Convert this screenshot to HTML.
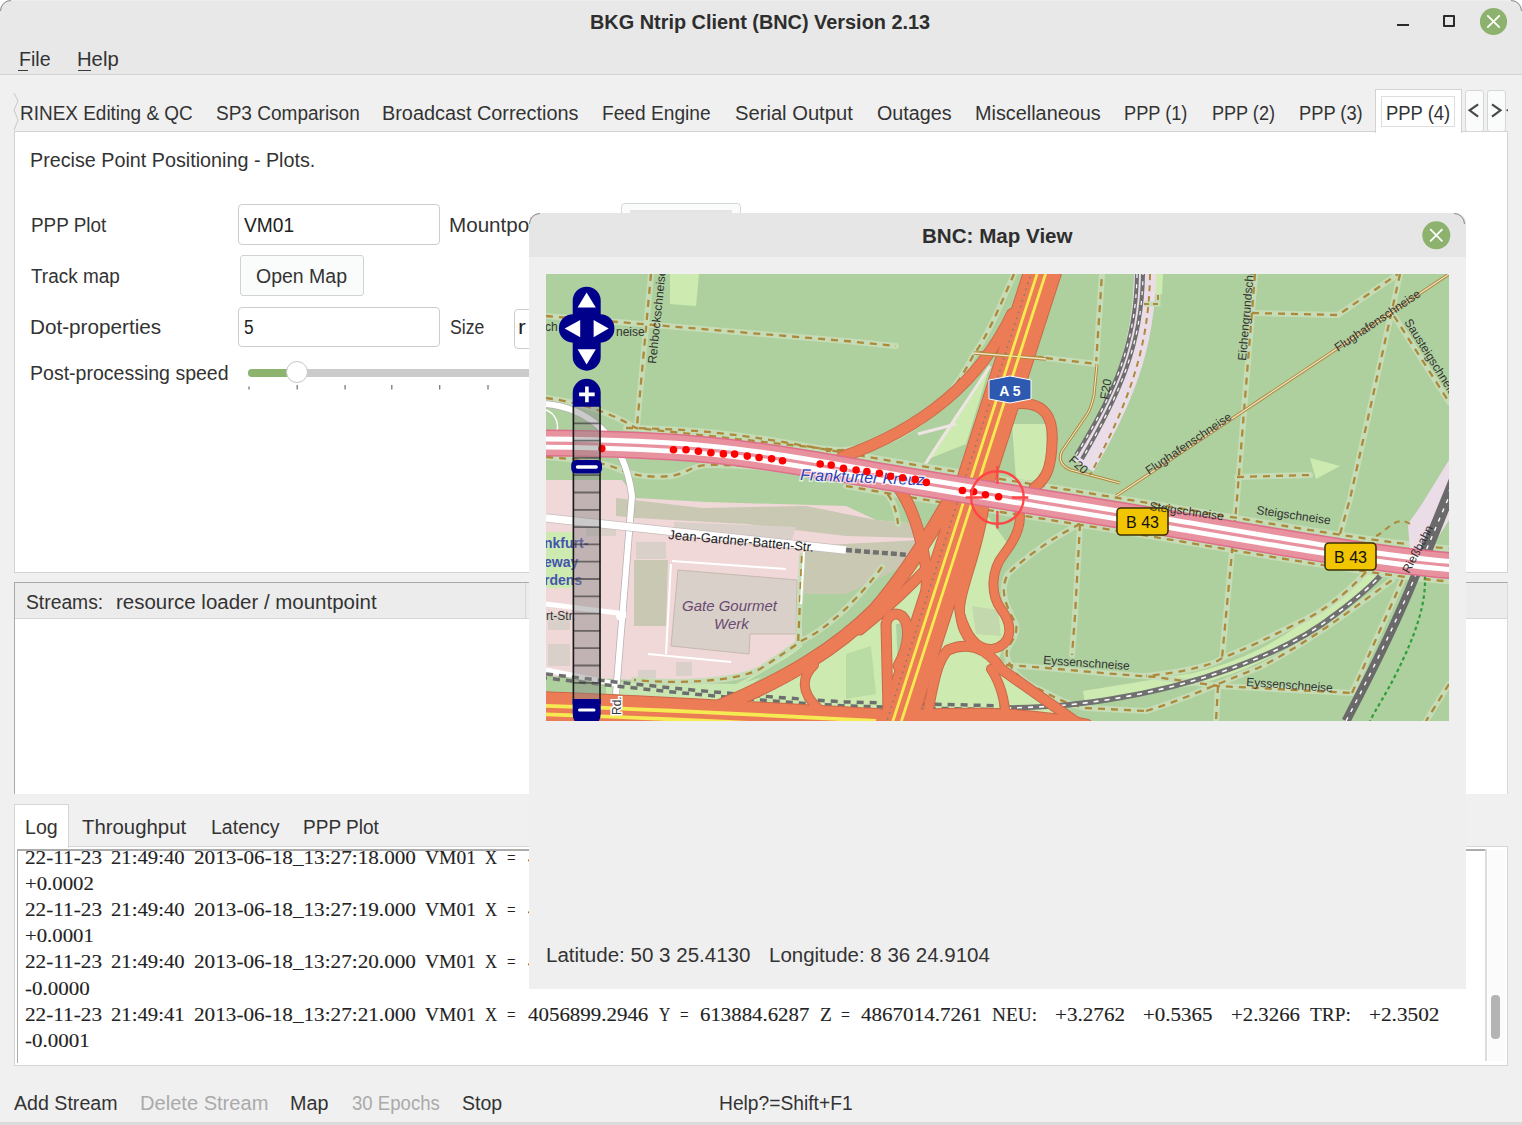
<!DOCTYPE html>
<html><head><meta charset="utf-8">
<style>
html,body{margin:0;padding:0;}
body{width:1522px;height:1125px;overflow:hidden;position:relative;background:#ffffff;font-family:"Liberation Sans",sans-serif;}
.a{position:absolute;box-sizing:border-box;}
.t{position:absolute;white-space:pre;line-height:1;transform-origin:0 0;}
</style></head><body>
<!-- window -->
<div class="a" style="left:0;top:0;width:1522px;height:1125px;background:#f0f0f0;border-radius:10px 10px 0 0;"></div>
<div class="a" style="left:0;top:0;width:1522px;height:75px;background:#e8e8e8;border-radius:10px 10px 0 0;border-top:1px solid #eeeeee;border-bottom:1px solid #d3d3d3;"></div>
<svg class="a" style="left:0;top:0" width="1522" height="14"><path d="M0.5,11 A10.5,10.5 0 0 1 11,0.5" fill="none" stroke="#8a8a8a" stroke-width="1"/><path d="M1511,0.5 A10.5,10.5 0 0 1 1521.5,11" fill="none" stroke="#8a8a8a" stroke-width="1"/></svg>
<div class="a" style="left:0;top:1122px;width:1522px;height:3px;background:#dadada;"></div>
<!-- window controls -->
<div class="a" style="left:1397px;top:23.5px;width:12px;height:2.5px;background:#2a2a2a;"></div>
<div class="a" style="left:1442.5px;top:15px;width:12px;height:12px;border:2px solid #2a2a2a;border-radius:1px;"></div>
<svg class="a" style="left:1479px;top:7px" width="29" height="29" viewBox="0 0 29 29"><circle cx="14.5" cy="14.5" r="13.6" fill="#8cb26e"/><path d="M8.3 8.3L20.7 20.7M20.7 8.3L8.3 20.7" stroke="#fff" stroke-width="1.8"/></svg>
<!-- menu underline -->
<div class="a" style="left:18px;top:69.5px;width:10px;height:1.5px;background:#3a3a3a;"></div>
<div class="a" style="left:78px;top:69.5px;width:13px;height:1.5px;background:#3a3a3a;"></div>
<!-- tab scroll indicator left -->
<svg class="a" style="left:12px;top:92px" width="10" height="40" viewBox="0 0 10 40"><path d="M2 1 L6 9 L2 18 L6 28 L2 38" fill="none" stroke="#c8c8c8" stroke-width="1"/></svg>
<!-- main tab pane -->
<div class="a" style="left:14px;top:131px;width:1494px;height:442px;background:#fff;border:1px solid #d3d3d3;"></div>
<!-- selected tab -->
<div class="a" style="left:1375px;top:89px;width:87px;height:44px;background:#fff;border:1px solid #d3d3d3;border-bottom:none;"></div>
<div class="a" style="left:1381px;top:96px;width:74px;height:31px;border:1px solid #dedede;"></div>
<!-- tab arrows -->
<div class="a" style="left:1464.5px;top:89.5px;width:19px;height:42px;background:#fafbfb;border:1px solid #d6d6d6;border-radius:3px;"></div>
<div class="a" style="left:1487px;top:89.5px;width:19px;height:42px;background:#fafbfb;border:1px solid #d6d6d6;border-radius:3px;"></div>
<svg class="a" style="left:1464px;top:89px" width="44" height="44" viewBox="0 0 44 44"><path d="M14.1,15.3 L5.6,21.3 L14.1,27.7 M28,15.3 L36.5,21.3 L28,27.7" fill="none" stroke="#4a4a4a" stroke-width="2.2"/><circle cx="43.4" cy="21.3" r="1" fill="#444"/></svg>
<!-- form widgets -->
<div class="a" style="left:238px;top:203.5px;width:202px;height:41px;background:#fff;border:1px solid #cdcdcd;border-radius:4px;"></div>
<div class="a" style="left:239.5px;top:254.5px;width:124px;height:41.5px;background:#fafbfb;border:1px solid #d2d2d2;border-radius:3px;"></div>
<div class="a" style="left:238px;top:306.5px;width:202px;height:40.5px;background:#fff;border:1px solid #cdcdcd;border-radius:4px;"></div>
<div class="a" style="left:514px;top:308.5px;width:120px;height:40px;background:#fff;border:1px solid #cdcdcd;border-radius:4px;"></div>
<div class="a" style="left:621px;top:203px;width:120px;height:40px;background:#fafbfb;border:1px solid #d6d6d6;border-radius:4px;"></div>
<div class="a" style="left:630px;top:209.5px;width:102px;height:10px;background:#e4e4e4;"></div>
<!-- slider -->
<div class="a" style="left:248px;top:368.5px;width:400px;height:8.5px;background:#cbcbcb;border-radius:4px;"></div>
<div class="a" style="left:248px;top:368.5px;width:50px;height:8.5px;background:#8cb46e;border-radius:4px 0 0 4px;"></div>
<div class="a" style="left:286.2px;top:361.3px;width:22px;height:22px;background:#fff;border:1px solid #c6c6c6;border-radius:50%;"></div>
<svg class="a" style="left:240px;top:380px" width="290" height="14" viewBox="0 0 290 14"><g stroke="#7a7a7a" stroke-width="1.3"><path d="M9 6.5V9.5M57.2 5V9.5M105.1 5V9.5M151.8 5V9.5M199.7 5V9.5M248 5V9.5"/></g></svg>
<!-- streams box -->
<div class="a" style="left:14px;top:582px;width:1494px;height:212px;background:#fff;border-top:1px solid #a9a9a9;border-left:1px solid #a9a9a9;border-right:1px solid #d9d9d9;"></div>
<div class="a" style="left:15px;top:583px;width:1492px;height:36px;background:#ececec;border-bottom:1px solid #d6d6d6;"></div>
<div class="a" style="left:525px;top:583px;width:1px;height:35px;background:#d6d6d6;"></div>
<!-- log tab widget -->
<div class="a" style="left:14px;top:846px;width:1494px;height:220px;background:#fff;border:1px solid #d6d6d6;"></div>
<div class="a" style="left:14px;top:803.5px;width:55px;height:44px;background:#fff;border:1px solid #d6d6d6;border-bottom:none;"></div>
<div class="a" style="left:17px;top:848.5px;width:1470px;height:214px;background:#fff;border-top:2px solid #acacac;border-left:1px solid #acacac;"></div>
<div class="a" style="left:1485px;top:849px;width:1.5px;height:212px;background:#dcdcdc;"></div>
<div class="a" style="left:1488px;top:850px;width:17px;height:211px;background:#fbfbfb;"></div>
<div class="a" style="left:1491px;top:995px;width:8.5px;height:43.5px;background:#b4b4b4;border-radius:4px;"></div>
<div class="t" style="left:589.61px;top:11.00px;font:normal 700 20px 'Liberation Sans';color:#2e2e2e;transform:scaleX(0.9937);">BKG Ntrip Client (BNC) Version 2.13</div>
<div class="t" style="left:18.52px;top:48.00px;font:normal 400 20px 'Liberation Sans';color:#333333;transform:scaleX(0.9806);">File</div>
<div class="t" style="left:77.49px;top:48.00px;font:normal 400 20px 'Liberation Sans';color:#333333;transform:scaleX(1.0123);">Help</div>
<div class="t" style="left:20.05px;top:102.40px;font:normal 400 20px 'Liberation Sans';color:#333333;transform:scaleX(0.9478);">RINEX Editing &amp; QC</div>
<div class="t" style="left:216.00px;top:102.40px;font:normal 400 20px 'Liberation Sans';color:#333333;transform:scaleX(0.9510);">SP3 Comparison</div>
<div class="t" style="left:382.11px;top:102.40px;font:normal 400 20px 'Liberation Sans';color:#333333;transform:scaleX(0.9931);">Broadcast Corrections</div>
<div class="t" style="left:602.24px;top:102.40px;font:normal 400 20px 'Liberation Sans';color:#333333;transform:scaleX(0.9573);">Feed Engine</div>
<div class="t" style="left:734.70px;top:102.40px;font:normal 400 20px 'Liberation Sans';color:#333333;transform:scaleX(1.0088);">Serial Output</div>
<div class="t" style="left:877.10px;top:102.40px;font:normal 400 20px 'Liberation Sans';color:#333333;transform:scaleX(0.9854);">Outages</div>
<div class="t" style="left:975.21px;top:102.40px;font:normal 400 20px 'Liberation Sans';color:#333333;transform:scaleX(0.9918);">Miscellaneous</div>
<div class="t" style="left:1124.19px;top:102.40px;font:normal 400 20px 'Liberation Sans';color:#333333;transform:scaleX(0.9099);">PPP (1)</div>
<div class="t" style="left:1211.70px;top:102.40px;font:normal 400 20px 'Liberation Sans';color:#333333;transform:scaleX(0.9040);">PPP (2)</div>
<div class="t" style="left:1298.79px;top:102.40px;font:normal 400 20px 'Liberation Sans';color:#333333;transform:scaleX(0.9143);">PPP (3)</div>
<div class="t" style="left:1385.58px;top:102.40px;font:normal 400 20px 'Liberation Sans';color:#333333;transform:scaleX(0.9216);">PPP (4)</div>
<div class="t" style="left:29.71px;top:149.20px;font:normal 400 20px 'Liberation Sans';color:#333333;transform:scaleX(0.9872);">Precise Point Positioning - Plots.</div>
<div class="t" style="left:30.56px;top:213.50px;font:normal 400 20px 'Liberation Sans';color:#333333;transform:scaleX(0.9449);">PPP Plot</div>
<div class="t" style="left:30.60px;top:264.60px;font:normal 400 20px 'Liberation Sans';color:#333333;transform:scaleX(0.9477);">Track map</div>
<div class="t" style="left:29.57px;top:315.50px;font:normal 400 20px 'Liberation Sans';color:#333333;transform:scaleX(1.0348);">Dot-properties</div>
<div class="t" style="left:29.62px;top:362.20px;font:normal 400 20px 'Liberation Sans';color:#333333;transform:scaleX(0.9760);">Post-processing speed</div>
<div class="t" style="left:243.60px;top:213.50px;font:normal 400 20px 'Liberation Sans';color:#222;transform:scaleX(0.9593);">VM01</div>
<div class="t" style="left:255.70px;top:264.60px;font:normal 400 20px 'Liberation Sans';color:#333333;transform:scaleX(0.9746);">Open Map</div>
<div class="t" style="left:243.80px;top:315.50px;font:normal 400 20px 'Liberation Sans';color:#222;transform:scaleX(0.8636);">5</div>
<div class="t" style="left:448.57px;top:213.50px;font:normal 400 20px 'Liberation Sans';color:#333333;transform:scaleX(1.0305);">Mountpoint</div>
<div class="t" style="left:449.60px;top:315.50px;font:normal 400 20px 'Liberation Sans';color:#333333;transform:scaleX(0.8818);">Size</div>
<div class="t" style="left:517.83px;top:315.50px;font:normal 400 20px 'Liberation Sans';color:#222;transform:scaleX(1.1667);">r</div>
<div class="t" style="left:26.00px;top:590.80px;font:normal 400 20px 'Liberation Sans';color:#333333;transform:scaleX(0.9648);">Streams:</div>
<div class="t" style="left:115.98px;top:590.80px;font:normal 400 20px 'Liberation Sans';color:#333333;transform:scaleX(1.0235);">resource loader / mountpoint</div>
<div class="t" style="left:24.62px;top:815.60px;font:normal 400 20px 'Liberation Sans';color:#333333;transform:scaleX(0.9793);">Log</div>
<div class="t" style="left:81.50px;top:815.60px;font:normal 400 20px 'Liberation Sans';color:#333333;transform:scaleX(1.0181);">Throughput</div>
<div class="t" style="left:210.62px;top:815.60px;font:normal 400 20px 'Liberation Sans';color:#333333;transform:scaleX(0.9776);">Latency</div>
<div class="t" style="left:302.55px;top:815.60px;font:normal 400 20px 'Liberation Sans';color:#333333;transform:scaleX(0.9524);">PPP Plot</div>
<div class="t" style="left:24.60px;top:847.00px;font:normal 400 19.5px 'Liberation Serif';color:#222;transform:scaleX(1.0884);-webkit-text-stroke:0.12px #222;">22-11-23</div>
<div class="t" style="left:111.00px;top:847.00px;font:normal 400 19.5px 'Liberation Serif';color:#222;transform:scaleX(1.0614);-webkit-text-stroke:0.12px #222;">21:49:40</div>
<div class="t" style="left:194.00px;top:847.00px;font:normal 400 19.5px 'Liberation Serif';color:#222;transform:scaleX(1.0868);-webkit-text-stroke:0.12px #222;">2013-06-18_13:27:18.000</div>
<div class="t" style="left:424.70px;top:847.00px;font:normal 400 19.5px 'Liberation Serif';color:#222;transform:scaleX(1.0006);-webkit-text-stroke:0.12px #222;">VM01</div>
<div class="t" style="left:485.10px;top:847.00px;font:normal 400 19.5px 'Liberation Serif';color:#222;transform:scaleX(0.8571);-webkit-text-stroke:0.12px #222;">X</div>
<div class="t" style="left:507.30px;top:847.00px;font:normal 400 19.5px 'Liberation Serif';color:#222;transform:scaleX(0.7818);-webkit-text-stroke:0.12px #222;">=</div>
<div class="t" style="left:527.80px;top:847.00px;font:normal 400 19.5px 'Liberation Serif';color:#222;transform:scaleX(1.0732);-webkit-text-stroke:0.12px #222;">4056899.2946</div>
<div class="t" style="left:658.60px;top:847.00px;font:normal 400 19.5px 'Liberation Serif';color:#222;transform:scaleX(0.8071);-webkit-text-stroke:0.12px #222;">Y</div>
<div class="t" style="left:680.10px;top:847.00px;font:normal 400 19.5px 'Liberation Serif';color:#222;transform:scaleX(0.7818);-webkit-text-stroke:0.12px #222;">=</div>
<div class="t" style="left:700.00px;top:847.00px;font:normal 400 19.5px 'Liberation Serif';color:#222;transform:scaleX(1.0680);-webkit-text-stroke:0.12px #222;">613884.6287</div>
<div class="t" style="left:820.20px;top:847.00px;font:normal 400 19.5px 'Liberation Serif';color:#222;transform:scaleX(0.9909);-webkit-text-stroke:0.12px #222;">Z</div>
<div class="t" style="left:841.40px;top:847.00px;font:normal 400 19.5px 'Liberation Serif';color:#222;transform:scaleX(0.8091);-webkit-text-stroke:0.12px #222;">=</div>
<div class="t" style="left:861.20px;top:847.00px;font:normal 400 19.5px 'Liberation Serif';color:#222;transform:scaleX(1.0801);-webkit-text-stroke:0.12px #222;">4867014.7261</div>
<div class="t" style="left:991.70px;top:847.00px;font:normal 400 19.5px 'Liberation Serif';color:#222;transform:scaleX(0.9892);-webkit-text-stroke:0.12px #222;">NEU:</div>
<div class="t" style="left:1054.90px;top:847.00px;font:normal 400 19.5px 'Liberation Serif';color:#222;transform:scaleX(1.0834);-webkit-text-stroke:0.12px #222;">+3.2762</div>
<div class="t" style="left:1143.30px;top:847.00px;font:normal 400 19.5px 'Liberation Serif';color:#222;transform:scaleX(1.0740);-webkit-text-stroke:0.12px #222;">+0.5365</div>
<div class="t" style="left:1230.80px;top:847.00px;font:normal 400 19.5px 'Liberation Serif';color:#222;transform:scaleX(1.0667);-webkit-text-stroke:0.12px #222;">+2.3266</div>
<div class="t" style="left:1310.40px;top:847.00px;font:normal 400 19.5px 'Liberation Serif';color:#222;transform:scaleX(0.9909);-webkit-text-stroke:0.12px #222;">TRP:</div>
<div class="t" style="left:1368.70px;top:847.00px;font:normal 400 19.5px 'Liberation Serif';color:#222;transform:scaleX(1.0897);-webkit-text-stroke:0.12px #222;">+2.3502</div>
<div class="t" style="left:25.30px;top:872.80px;font:normal 400 19.5px 'Liberation Serif';color:#222;transform:scaleX(1.0662);-webkit-text-stroke:0.12px #222;">+0.0002</div>
<div class="t" style="left:24.60px;top:899.10px;font:normal 400 19.5px 'Liberation Serif';color:#222;transform:scaleX(1.0884);-webkit-text-stroke:0.12px #222;">22-11-23</div>
<div class="t" style="left:111.00px;top:899.10px;font:normal 400 19.5px 'Liberation Serif';color:#222;transform:scaleX(1.0614);-webkit-text-stroke:0.12px #222;">21:49:40</div>
<div class="t" style="left:194.00px;top:899.10px;font:normal 400 19.5px 'Liberation Serif';color:#222;transform:scaleX(1.0868);-webkit-text-stroke:0.12px #222;">2013-06-18_13:27:19.000</div>
<div class="t" style="left:424.70px;top:899.10px;font:normal 400 19.5px 'Liberation Serif';color:#222;transform:scaleX(1.0006);-webkit-text-stroke:0.12px #222;">VM01</div>
<div class="t" style="left:485.10px;top:899.10px;font:normal 400 19.5px 'Liberation Serif';color:#222;transform:scaleX(0.8571);-webkit-text-stroke:0.12px #222;">X</div>
<div class="t" style="left:507.30px;top:899.10px;font:normal 400 19.5px 'Liberation Serif';color:#222;transform:scaleX(0.7818);-webkit-text-stroke:0.12px #222;">=</div>
<div class="t" style="left:527.80px;top:899.10px;font:normal 400 19.5px 'Liberation Serif';color:#222;transform:scaleX(1.0732);-webkit-text-stroke:0.12px #222;">4056899.2946</div>
<div class="t" style="left:658.60px;top:899.10px;font:normal 400 19.5px 'Liberation Serif';color:#222;transform:scaleX(0.8071);-webkit-text-stroke:0.12px #222;">Y</div>
<div class="t" style="left:680.10px;top:899.10px;font:normal 400 19.5px 'Liberation Serif';color:#222;transform:scaleX(0.7818);-webkit-text-stroke:0.12px #222;">=</div>
<div class="t" style="left:700.00px;top:899.10px;font:normal 400 19.5px 'Liberation Serif';color:#222;transform:scaleX(1.0680);-webkit-text-stroke:0.12px #222;">613884.6287</div>
<div class="t" style="left:820.20px;top:899.10px;font:normal 400 19.5px 'Liberation Serif';color:#222;transform:scaleX(0.9909);-webkit-text-stroke:0.12px #222;">Z</div>
<div class="t" style="left:841.40px;top:899.10px;font:normal 400 19.5px 'Liberation Serif';color:#222;transform:scaleX(0.8091);-webkit-text-stroke:0.12px #222;">=</div>
<div class="t" style="left:861.20px;top:899.10px;font:normal 400 19.5px 'Liberation Serif';color:#222;transform:scaleX(1.0801);-webkit-text-stroke:0.12px #222;">4867014.7261</div>
<div class="t" style="left:991.70px;top:899.10px;font:normal 400 19.5px 'Liberation Serif';color:#222;transform:scaleX(0.9892);-webkit-text-stroke:0.12px #222;">NEU:</div>
<div class="t" style="left:1054.90px;top:899.10px;font:normal 400 19.5px 'Liberation Serif';color:#222;transform:scaleX(1.0834);-webkit-text-stroke:0.12px #222;">+3.2762</div>
<div class="t" style="left:1143.30px;top:899.10px;font:normal 400 19.5px 'Liberation Serif';color:#222;transform:scaleX(1.0740);-webkit-text-stroke:0.12px #222;">+0.5365</div>
<div class="t" style="left:1230.80px;top:899.10px;font:normal 400 19.5px 'Liberation Serif';color:#222;transform:scaleX(1.0667);-webkit-text-stroke:0.12px #222;">+2.3266</div>
<div class="t" style="left:1310.40px;top:899.10px;font:normal 400 19.5px 'Liberation Serif';color:#222;transform:scaleX(0.9909);-webkit-text-stroke:0.12px #222;">TRP:</div>
<div class="t" style="left:1368.70px;top:899.10px;font:normal 400 19.5px 'Liberation Serif';color:#222;transform:scaleX(1.0897);-webkit-text-stroke:0.12px #222;">+2.3502</div>
<div class="t" style="left:25.30px;top:925.20px;font:normal 400 19.5px 'Liberation Serif';color:#222;transform:scaleX(1.0662);-webkit-text-stroke:0.12px #222;">+0.0001</div>
<div class="t" style="left:24.60px;top:951.40px;font:normal 400 19.5px 'Liberation Serif';color:#222;transform:scaleX(1.0884);-webkit-text-stroke:0.12px #222;">22-11-23</div>
<div class="t" style="left:111.00px;top:951.40px;font:normal 400 19.5px 'Liberation Serif';color:#222;transform:scaleX(1.0614);-webkit-text-stroke:0.12px #222;">21:49:40</div>
<div class="t" style="left:194.00px;top:951.40px;font:normal 400 19.5px 'Liberation Serif';color:#222;transform:scaleX(1.0868);-webkit-text-stroke:0.12px #222;">2013-06-18_13:27:20.000</div>
<div class="t" style="left:424.70px;top:951.40px;font:normal 400 19.5px 'Liberation Serif';color:#222;transform:scaleX(1.0006);-webkit-text-stroke:0.12px #222;">VM01</div>
<div class="t" style="left:485.10px;top:951.40px;font:normal 400 19.5px 'Liberation Serif';color:#222;transform:scaleX(0.8571);-webkit-text-stroke:0.12px #222;">X</div>
<div class="t" style="left:507.30px;top:951.40px;font:normal 400 19.5px 'Liberation Serif';color:#222;transform:scaleX(0.7818);-webkit-text-stroke:0.12px #222;">=</div>
<div class="t" style="left:527.80px;top:951.40px;font:normal 400 19.5px 'Liberation Serif';color:#222;transform:scaleX(1.0732);-webkit-text-stroke:0.12px #222;">4056899.2946</div>
<div class="t" style="left:658.60px;top:951.40px;font:normal 400 19.5px 'Liberation Serif';color:#222;transform:scaleX(0.8071);-webkit-text-stroke:0.12px #222;">Y</div>
<div class="t" style="left:680.10px;top:951.40px;font:normal 400 19.5px 'Liberation Serif';color:#222;transform:scaleX(0.7818);-webkit-text-stroke:0.12px #222;">=</div>
<div class="t" style="left:700.00px;top:951.40px;font:normal 400 19.5px 'Liberation Serif';color:#222;transform:scaleX(1.0680);-webkit-text-stroke:0.12px #222;">613884.6287</div>
<div class="t" style="left:820.20px;top:951.40px;font:normal 400 19.5px 'Liberation Serif';color:#222;transform:scaleX(0.9909);-webkit-text-stroke:0.12px #222;">Z</div>
<div class="t" style="left:841.40px;top:951.40px;font:normal 400 19.5px 'Liberation Serif';color:#222;transform:scaleX(0.8091);-webkit-text-stroke:0.12px #222;">=</div>
<div class="t" style="left:861.20px;top:951.40px;font:normal 400 19.5px 'Liberation Serif';color:#222;transform:scaleX(1.0801);-webkit-text-stroke:0.12px #222;">4867014.7261</div>
<div class="t" style="left:991.70px;top:951.40px;font:normal 400 19.5px 'Liberation Serif';color:#222;transform:scaleX(0.9892);-webkit-text-stroke:0.12px #222;">NEU:</div>
<div class="t" style="left:1054.90px;top:951.40px;font:normal 400 19.5px 'Liberation Serif';color:#222;transform:scaleX(1.0834);-webkit-text-stroke:0.12px #222;">+3.2762</div>
<div class="t" style="left:1143.30px;top:951.40px;font:normal 400 19.5px 'Liberation Serif';color:#222;transform:scaleX(1.0740);-webkit-text-stroke:0.12px #222;">+0.5365</div>
<div class="t" style="left:1230.80px;top:951.40px;font:normal 400 19.5px 'Liberation Serif';color:#222;transform:scaleX(1.0667);-webkit-text-stroke:0.12px #222;">+2.3266</div>
<div class="t" style="left:1310.40px;top:951.40px;font:normal 400 19.5px 'Liberation Serif';color:#222;transform:scaleX(0.9909);-webkit-text-stroke:0.12px #222;">TRP:</div>
<div class="t" style="left:1368.70px;top:951.40px;font:normal 400 19.5px 'Liberation Serif';color:#222;transform:scaleX(1.0897);-webkit-text-stroke:0.12px #222;">+2.3502</div>
<div class="t" style="left:25.30px;top:977.60px;font:normal 400 19.5px 'Liberation Serif';color:#222;transform:scaleX(1.0780);-webkit-text-stroke:0.12px #222;">-0.0000</div>
<div class="t" style="left:24.60px;top:1003.80px;font:normal 400 19.5px 'Liberation Serif';color:#222;transform:scaleX(1.0884);-webkit-text-stroke:0.12px #222;">22-11-23</div>
<div class="t" style="left:111.00px;top:1003.80px;font:normal 400 19.5px 'Liberation Serif';color:#222;transform:scaleX(1.0614);-webkit-text-stroke:0.12px #222;">21:49:41</div>
<div class="t" style="left:194.00px;top:1003.80px;font:normal 400 19.5px 'Liberation Serif';color:#222;transform:scaleX(1.0868);-webkit-text-stroke:0.12px #222;">2013-06-18_13:27:21.000</div>
<div class="t" style="left:424.70px;top:1003.80px;font:normal 400 19.5px 'Liberation Serif';color:#222;transform:scaleX(1.0006);-webkit-text-stroke:0.12px #222;">VM01</div>
<div class="t" style="left:485.10px;top:1003.80px;font:normal 400 19.5px 'Liberation Serif';color:#222;transform:scaleX(0.8571);-webkit-text-stroke:0.12px #222;">X</div>
<div class="t" style="left:507.30px;top:1003.80px;font:normal 400 19.5px 'Liberation Serif';color:#222;transform:scaleX(0.7818);-webkit-text-stroke:0.12px #222;">=</div>
<div class="t" style="left:527.80px;top:1003.80px;font:normal 400 19.5px 'Liberation Serif';color:#222;transform:scaleX(1.0732);-webkit-text-stroke:0.12px #222;">4056899.2946</div>
<div class="t" style="left:658.60px;top:1003.80px;font:normal 400 19.5px 'Liberation Serif';color:#222;transform:scaleX(0.8071);-webkit-text-stroke:0.12px #222;">Y</div>
<div class="t" style="left:680.10px;top:1003.80px;font:normal 400 19.5px 'Liberation Serif';color:#222;transform:scaleX(0.7818);-webkit-text-stroke:0.12px #222;">=</div>
<div class="t" style="left:700.00px;top:1003.80px;font:normal 400 19.5px 'Liberation Serif';color:#222;transform:scaleX(1.0680);-webkit-text-stroke:0.12px #222;">613884.6287</div>
<div class="t" style="left:820.20px;top:1003.80px;font:normal 400 19.5px 'Liberation Serif';color:#222;transform:scaleX(0.9909);-webkit-text-stroke:0.12px #222;">Z</div>
<div class="t" style="left:841.40px;top:1003.80px;font:normal 400 19.5px 'Liberation Serif';color:#222;transform:scaleX(0.8091);-webkit-text-stroke:0.12px #222;">=</div>
<div class="t" style="left:861.20px;top:1003.80px;font:normal 400 19.5px 'Liberation Serif';color:#222;transform:scaleX(1.0801);-webkit-text-stroke:0.12px #222;">4867014.7261</div>
<div class="t" style="left:991.70px;top:1003.80px;font:normal 400 19.5px 'Liberation Serif';color:#222;transform:scaleX(0.9892);-webkit-text-stroke:0.12px #222;">NEU:</div>
<div class="t" style="left:1054.90px;top:1003.80px;font:normal 400 19.5px 'Liberation Serif';color:#222;transform:scaleX(1.0834);-webkit-text-stroke:0.12px #222;">+3.2762</div>
<div class="t" style="left:1143.30px;top:1003.80px;font:normal 400 19.5px 'Liberation Serif';color:#222;transform:scaleX(1.0740);-webkit-text-stroke:0.12px #222;">+0.5365</div>
<div class="t" style="left:1230.80px;top:1003.80px;font:normal 400 19.5px 'Liberation Serif';color:#222;transform:scaleX(1.0667);-webkit-text-stroke:0.12px #222;">+2.3266</div>
<div class="t" style="left:1310.40px;top:1003.80px;font:normal 400 19.5px 'Liberation Serif';color:#222;transform:scaleX(0.9909);-webkit-text-stroke:0.12px #222;">TRP:</div>
<div class="t" style="left:1368.70px;top:1003.80px;font:normal 400 19.5px 'Liberation Serif';color:#222;transform:scaleX(1.0897);-webkit-text-stroke:0.12px #222;">+2.3502</div>
<div class="t" style="left:25.30px;top:1029.90px;font:normal 400 19.5px 'Liberation Serif';color:#222;transform:scaleX(1.0780);-webkit-text-stroke:0.12px #222;">-0.0001</div>
<div class="t" style="left:14.30px;top:1091.50px;font:normal 400 20px 'Liberation Sans';color:#333333;transform:scaleX(0.9805);">Add Stream</div>
<div class="t" style="left:139.80px;top:1091.50px;font:normal 400 20px 'Liberation Sans';color:#aaaaaa;transform:scaleX(1.0042);">Delete Stream</div>
<div class="t" style="left:289.71px;top:1091.50px;font:normal 400 20px 'Liberation Sans';color:#333333;transform:scaleX(0.9872);">Map</div>
<div class="t" style="left:351.90px;top:1091.50px;font:normal 400 20px 'Liberation Sans';color:#aaaaaa;transform:scaleX(0.9290);">30 Epochs</div>
<div class="t" style="left:462.20px;top:1091.50px;font:normal 400 20px 'Liberation Sans';color:#333333;transform:scaleX(0.9751);">Stop</div>
<div class="t" style="left:718.54px;top:1091.80px;font:normal 400 20px 'Liberation Sans';color:#333333;transform:scaleX(0.9612);">Help?=Shift+F1</div>
<!-- map dialog -->
<div class="a" style="left:529px;top:213px;width:937px;height:776px;background:#efefef;border-radius:10px 10px 0 0;overflow:hidden;">
  <div class="a" style="left:0;top:0;width:937px;height:44px;background:#e6e6e6;"></div>
  <svg class="a" style="left:893px;top:7.5px" width="29" height="29" viewBox="0 0 29 29"><circle cx="14.3" cy="14.3" r="14" fill="#8cb26e"/><path d="M8.2 8.2L20.4 20.4M20.4 8.2L8.2 20.4" stroke="#fff" stroke-width="1.8"/></svg>
  <div class="a" style="left:17px;top:61px;width:903px;height:447px;overflow:hidden;">
<svg width="903" height="447" viewBox="0 0 903 447" style="display:block">
<defs>
  <style>
   .trk{fill:none;stroke:#c6dcb6;stroke-width:6;stroke-linecap:round;stroke-linejoin:round}
   .dash{fill:none;stroke:#ad8a3b;stroke-width:2.3;stroke-dasharray:7 6}
   .mw{fill:none;stroke:#eb7c55;stroke-linecap:round;stroke-linejoin:round}
   .mwc{fill:none;stroke:#c9694a;stroke-linecap:round;stroke-linejoin:round}
   .lbl{font-family:"Liberation Sans",sans-serif;fill:#333;font-size:11px}
  </style>
  <g id="tracks">
   <path d="M0,42 L300,67 L350,72"/>
   <path d="M105,0 L91,152"/>
   <path d="M0,124 C30,128 60,136 90,154 L300,177"/>
   <path d="M468,0 C455,30 440,65 428,80 C410,115 385,150 340,168 C320,175 300,176 280,177"/>
   <path d="M550,90 L556,0"/>
   <path d="M709,0 L691,225 L676,384"/>
   <path d="M706,39 L792,41 L852,0"/>
   <path d="M854,0 L804,225 L794,260"/>
   <path d="M848,42 L903,128"/>
   <path d="M691,203 L764,201"/>
   <path d="M0,183 C30,185 55,188 70,194 C85,201 100,204 125,202 C140,200 145,192 160,191 C220,190 280,202 330,210 C345,220 350,232 352,250"/>
   <path d="M534,250 C510,262 480,282 462,300 C452,318 462,335 470,350 C473,365 458,372 461,382 C464,398 480,410 495,416 C510,424 520,430 540,434 L600,437"/>
   <path d="M534,250 L529,342 L526,381"/>
   <path d="M460,391 C520,395 560,400 610,403 L672,412 L806,419"/>
   <path d="M600,437 C640,425 670,410 712,394 C760,370 800,340 846,306"/>
   <path d="M676,384 C670,390 640,398 600,402"/>
   <path d="M820,298 C800,320 780,335 760,345 C720,365 700,375 676,384"/>
   <path d="M672,412 L670,447"/>
   <path d="M806,419 L860,298"/>
   <path d="M903,410 L880,447"/>
   <path d="M336,293 C320,315 300,335 294,340 C280,352 270,360 257,366 C245,374 230,385 214,395 C190,408 130,410 88,406"/>
   <path d="M256,282 L252,371"/>
   <path d="M80,171 C160,172 200,178 300,196 C400,214 520,232 624,249.6 S 840,287 910,292" transform="translate(0,-17)"/>
   <path d="M300,196 C400,214 520,232 624,249.6 S 840,287 910,292" transform="translate(0,16)"/>
  </g>
</defs>
<rect width="903" height="447" fill="#aed09e"/>
<!-- landuse -->
<polygon points="124,0 153,0 150,32 124,30" fill="#cdebb0"/>
<polygon points="606,0 617,0 616,20 606,20" fill="#cdebb0"/>
<polygon points="0,206 76,206 90,224 160,228 300,232 330,246 372,250 376,266 300,272 258,280 256,368 240,382 214,395 190,406 130,410 88,406 0,402" fill="#f0d8d8"/>
<polygon points="60,408 190,410 214,398 257,370 270,362 200,415 180,428 60,424" fill="#c8e6b2"/>
<polygon points="70,224 156,234 260,232 330,246 372,250 372,264 300,262 200,250 90,244 70,242" fill="#c9c8b3"/>
<polygon points="88,286 122,286 120,352 88,352" fill="#c9c8b3"/>
<polygon points="258,272 376,266 372,300 300,320 258,322" fill="#c9c8b3"/>
<polygon points="256,320 300,320 342,300 372,283 380,300 330,345 290,372 240,396 200,408 230,390 256,375" fill="#aed09e"/>
<polygon points="0,258 28,258 28,314 0,314" fill="#cdebb0"/>
<polygon points="132,296 251,306 250,360 204,360 203,380 125,372" fill="#d9d0c9" stroke="#c5b9b0" stroke-width="1"/>
<polygon points="128,248 250,253 246,266 128,262" fill="#d9d0c9"/>
<polygon points="90,268 120,268 120,285 90,285" fill="#d9d0c9"/>
<polygon points="130,388 146,388 146,402 130,402" fill="#d9d0c9"/>
<polygon points="92,396 110,396 110,404 92,404" fill="#d9d0c9"/>
<polygon points="2,340 24,340 24,356 2,356" fill="#d9d0c9"/>
<polygon points="2,370 24,370 24,392 2,392" fill="#d9d0c9"/>
<polygon points="40,250 70,250 70,262 40,262" fill="#d9d0c9"/>
<!-- light green in interchange -->
<polygon points="100,425 175,420 240,405 290,375 330,335 360,300 385,260 410,222 440,240 462,270 452,300 450,330 462,360 450,392 534,447 175,447" fill="#cdebb0"/>
<polygon points="350,350 368,348 372,385 352,392" fill="#aed09e"/>
<polygon points="300,380 325,372 330,420 300,425" fill="#b9dba4"/>
<polygon points="426,332 452,336 455,362 430,360" fill="#c3d8ad"/>
<polygon points="466,150 500,150 502,208 470,205" fill="#cdebb0"/>
<polygon points="444,92 420,170 380,186 410,140" fill="#cdebb0"/>
<polygon points="764,184 794,192 770,205" fill="#cdebb0"/>
<path d="M540,430 C560,427 600,420 650,412 C700,400 740,380 790,340 C810,325 825,312 834,302" fill="none" stroke="#cdebb0" stroke-width="12" transform="translate(-2,-7)"/>
<!-- footway near A5 -->
<path d="M444,92 L378,192 M410,150 L372,160" fill="none" stroke="#efe4e4" stroke-width="3"/>
<!-- tracks -->
<use href="#tracks" class="trk"/>
<use href="#tracks" class="dash"/>
<!-- Flughafenschneise double line -->
<g fill="none">
<path d="M570,222 L903,0" stroke="#ad8a3b" stroke-width="3.2"/>
<path d="M570,222 L903,0" stroke="#f3e4c8" stroke-width="1.2"/>
<path d="M430,78 L500,84" stroke="#ad8a3b" stroke-width="3.2"/>
<path d="M430,78 L500,84" stroke="#f3e4c8" stroke-width="1.2"/>
<path d="M500,84 L550,90" class="trk"/>
<path d="M500,84 L550,90" class="dash"/>
<path d="M551,90 L548,121 C546,130 544,137 540,142 L516,177 C512,185 515,192 525,196 L574,209" stroke="#ad8a3b" stroke-width="3"/>
<path d="M551,90 L548,121 C546,130 544,137 540,142 L516,177 C512,185 515,192 525,196 L574,209" stroke="#f3e4c8" stroke-width="1.1"/>
</g>
<!-- railway F20 with lavender -->
<path d="M599,0 C598,72 577,125 538,192" fill="none" stroke="#ebdde8" stroke-width="22"/>
<path d="M591,0 C590,70 568,120 530,181" fill="none" stroke="#6e6e6e" stroke-width="4"/>
<path d="M597,0 C596,70 574,120 536,185" fill="none" stroke="#6e6e6e" stroke-width="4"/>
<path d="M591,0 C590,70 568,120 530,181" fill="none" stroke="#fff" stroke-width="1.2" stroke-dasharray="4 6"/>
<path d="M597,0 C596,70 574,120 536,185" fill="none" stroke="#fff" stroke-width="1.2" stroke-dasharray="4 6" stroke-dashoffset="3"/>
<path d="M604,0 C603,75 582,130 544,201" fill="none" stroke="#ad8a3b" stroke-width="2" stroke-dasharray="6 5"/>
<path d="M598,30 L612,30 L612,20" fill="none" stroke="#c6dcb6" stroke-width="5"/>
<path d="M598,30 L612,30 L612,20" fill="none" stroke="#ad8a3b" stroke-width="2" stroke-dasharray="5 4"/>
<!-- railway bottom right -->
<path d="M460,434 C500,433 520,432 560,426 C650,412 740,380 790,340 C810,325 825,312 834,302" fill="none" stroke="#707070" stroke-width="5.5"/>
<path d="M460,434 C500,433 520,432 560,426 C650,412 740,380 790,340 C810,325 825,312 834,302" fill="none" stroke="#fff" stroke-width="1.6" stroke-dasharray="5 6"/>
<!-- Riessbahn -->
<polygon points="862,250 876,230 903,186 903,246 883,278 864,278" fill="#ebdde8"/>
<path d="M864,250 C850,240 840,258 830,262" fill="none" stroke="#ad8a3b" stroke-width="2" stroke-dasharray="6 5"/>
<path d="M876,276 L905,205" fill="none" stroke="#6a6a6a" stroke-width="4"/>
<path d="M884,278 L905,226" fill="none" stroke="#6a6a6a" stroke-width="4"/>
<path d="M800,447 C830,390 856,335 870,300 L905,218" fill="none" stroke="#6a6a6a" stroke-width="9"/>
<path d="M800,447 C830,390 856,335 870,300 L905,218" fill="none" stroke="#fff" stroke-width="1.4" stroke-dasharray="4 6"/>

<path d="M879,302 C880,330 870,360 850,400 C840,420 830,435 824,447" fill="none" stroke="#2e9e3a" stroke-width="2.2" stroke-dasharray="3.5 3"/>
<!-- white road curve top-left -->
<path d="M0,130 C40,134 78,160 86,222 L70,420" fill="none" stroke="#b8b0b0" stroke-width="7.5"/>
<path d="M0,130 C40,134 78,160 86,222 L70,420" fill="none" stroke="#fff" stroke-width="6"/>
<path d="M0,136 C10,140 14,150 10,162" fill="none" stroke="#fff" stroke-width="1.5"/>
<!-- white roads industrial -->
<path d="M0,244 L300,276" fill="none" stroke="#c8bcbc" stroke-width="9"/>
<path d="M0,244 L300,276" fill="none" stroke="#fff" stroke-width="7.5"/>
<path d="M0,330 L80,340" fill="none" stroke="#fff" stroke-width="5"/>
<circle cx="75" cy="342" r="5" fill="#fff"/>
<path d="M0,396 L70,410" fill="none" stroke="#fff" stroke-width="5"/>
<path d="M125,290 L120,380" fill="none" stroke="#fff" stroke-width="2"/>
<path d="M126,287 L240,295" fill="none" stroke="#fff" stroke-width="2"/>
<path d="M102,380 L185,388" fill="none" stroke="#fff" stroke-width="2"/>
<path d="M258,278 L255,330" fill="none" stroke="#fff" stroke-width="2"/>
<!-- railway dashed along motorway bottom left -->
<path d="M0,400 C100,412 200,422 300,428 L460,432" fill="none" stroke="#6e6e6e" stroke-width="3.5" stroke-dasharray="7 6"/>
<path d="M0,404 C100,416 200,426 300,432 L460,436" fill="none" stroke="#6e6e6e" stroke-width="3.5" stroke-dasharray="7 6" stroke-dashoffset="6"/>
<path d="M300,276 L375,282" fill="none" stroke="#707070" stroke-width="4.5" stroke-dasharray="6 3"/>
<!-- motorways -->
<g class="mwc">
 <path d="M-5,436 C100,440 200,446 330,453" stroke-width="38"/>
 <path d="M268,391 C256,402 254,418 272,434" stroke-width="10"/>
 <path d="M320,444 C400,442 460,436 540,452" stroke-width="15"/>
 <path d="M497,-3 L351,450" stroke-width="38"/>
 <path d="M466,40 C440,95 390,150 296,183" stroke-width="12"/>
 <path d="M468,130 C500,126 508,145 506,170 C505,195 500,205 488,214" stroke-width="11"/>
 <path d="M175,432 C240,405 290,375 330,335 C360,300 385,260 410,215" stroke-width="15"/>
 <path d="M314,356 C340,335 362,315 381,294" stroke-width="11"/>
 <path d="M345,205 C362,222 374,250 381,300 L380,335" stroke-width="12"/>
 <path d="M342,437 L340,350 C342,340 350,338 356,342 C364,350 364,370 352,392" stroke-width="11"/>
 <path d="M382,437 C388,405 392,385 402,376 C420,368 440,372 455,395 L536,452" stroke-width="11"/>
 <path d="M445,395 C455,410 460,430 460,452" stroke-width="10"/>
 <path d="M438,235 C432,280 412,320 414,340 C416,360 425,370 437,376" stroke-width="10"/>
 <path d="M471,230 C478,245 472,262 458,280 C445,296 444,320 455,335 C468,352 466,372 446,375 C430,376 420,360 414,340 C410,320 412,300 418,280" stroke-width="10"/>
 
</g>
<g class="mw">
 <path d="M-5,436 C100,440 200,446 330,453" stroke-width="36"/>
 <path d="M268,391 C256,402 254,418 272,434" stroke-width="8"/>
 <path d="M320,444 C400,442 460,436 540,452" stroke-width="13"/>
 <path d="M497,-3 L351,450" stroke-width="36"/>
 <path d="M466,40 C440,95 390,150 296,183" stroke-width="10"/>
 <path d="M468,130 C500,126 508,145 506,170 C505,195 500,205 488,214" stroke-width="9"/>
 <path d="M175,432 C240,405 290,375 330,335 C360,300 385,260 410,215" stroke-width="13"/>
 <path d="M314,356 C340,335 362,315 381,294" stroke-width="9"/>
 <path d="M345,205 C362,222 374,250 381,300 L380,335" stroke-width="10"/>
 <path d="M342,437 L340,350 C342,340 350,338 356,342 C364,350 364,370 352,392" stroke-width="9"/>
 <path d="M382,437 C388,405 392,385 402,376 C420,368 440,372 455,395 L536,452" stroke-width="9"/>
 <path d="M445,395 C455,410 460,430 460,452" stroke-width="8"/>
 <path d="M438,235 C432,280 412,320 414,340 C416,360 425,370 437,376" stroke-width="8"/>
 <path d="M471,230 C478,245 472,262 458,280 C445,296 444,320 455,335 C468,352 466,372 446,375 C430,376 420,360 414,340 C410,320 412,300 418,280" stroke-width="8"/>
 
</g>
<!-- A5 lines -->
<path d="M428,79 L500,85" fill="none" stroke="#ad8a3b" stroke-width="3.4"/>
<path d="M428,79 L500,85" fill="none" stroke="#f3e4c8" stroke-width="1.3"/>
<path d="M492,-3 L346,450" fill="none" stroke="#f6ea52" stroke-width="2.8"/>
<path d="M500.5,-3 L354.5,450" fill="none" stroke="#f6ea52" stroke-width="2.8"/>
<path d="M486,-3 L340,450" fill="none" stroke="#8a7a6a" stroke-width="1.6" stroke-dasharray="1.6 4.5"/>
<path d="M-5,431.8 C100,435 200,440 330,447" fill="none" stroke="#f6ea52" stroke-width="3.8"/>
<path d="M-5,440.3 C100,443.5 200,448.5 330,455.5" fill="none" stroke="#f6ea52" stroke-width="3.8"/>
<!-- B43 band -->
<g fill="none">
<path d="M-5,169 C140,170 200,178 300,196 S 520,232 624,249.6 S 840,287 910,292" stroke="#dd6f8a" stroke-width="27"/>
<path d="M-5,169 C140,170 200,178 300,196 S 520,232 624,249.6 S 840,287 910,292" stroke="#e9929f" stroke-width="24"/>
<path d="M-5,169 C140,170 200,178 300,196 S 520,232 624,249.6 S 840,287 910,292" stroke="#ffffff" stroke-width="13"/>
<path d="M-5,169 C140,170 200,178 300,196 S 520,232 624,249.6 S 840,287 910,292" stroke="#e9929f" stroke-width="3.2"/>
</g>
<!-- shields -->
<g>
 <rect x="571" y="234" width="51" height="27" rx="4" fill="#f1c500" stroke="#3a3000" stroke-width="1.6"/>
 <text x="596.5" y="254" text-anchor="middle" font-family="Liberation Sans" font-size="16" fill="#111">B 43</text>
 <rect x="779" y="269" width="51" height="27" rx="4" fill="#f1c500" stroke="#3a3000" stroke-width="1.6"/>
 <text x="804.5" y="289" text-anchor="middle" font-family="Liberation Sans" font-size="16" fill="#111">B 43</text>
 <path d="M443,106 L464,102 L485,106 L485,125 L464,129 L443,125 Z" fill="#2d5ab0" stroke="#fff" stroke-width="1"/>
 <text x="464" y="121.5" text-anchor="middle" font-family="Liberation Sans" font-weight="700" font-size="14" fill="#fff">A 5</text>
</g>
<!-- labels -->
<g class="lbl">
 <text x="254" y="206" transform="rotate(2.5 254 206)" style="font-style:italic;fill:#2c45b8;font-size:16px;stroke:#fff;stroke-width:2.5px;paint-order:stroke;stroke-opacity:0.7">Frankfurter Kreuz</text>
 <text x="122" y="265" transform="rotate(5 122 265)" style="font-size:13px;fill:#222">Jean-Gardner-Batten-Str.</text>
 <text x="136" y="337" style="font-style:italic;fill:#6a4a72;font-size:15px">Gate Gourmet</text>
 <text x="168" y="355" style="font-style:italic;fill:#6a4a72;font-size:15px">Werk</text>
 <text x="-2" y="274" style="font-weight:700;fill:#4454b0;font-size:14px">nkfurt-</text>
 <text x="-2" y="293" style="font-weight:700;fill:#4454b0;font-size:14px">eway</text>
 <text x="-2" y="311" style="font-weight:700;fill:#4454b0;font-size:14px">rdens</text>
 <text x="0" y="346" style="font-size:12px">rt-Str.</text>
 <text x="0" y="0" transform="translate(75,441) rotate(-90)" style="font-size:12px;stroke:#fff;stroke-width:3px;paint-order:stroke">Rd.</text>
 <text x="0" y="0" transform="translate(110,90) rotate(-84)" style="font-size:12px">Rehbockschneise</text>
 <text x="70" y="62" style="font-size:12px">neise</text>
 <text x="-1" y="57" style="font-size:12px">ch</text>
 <text x="0" y="0" transform="translate(700,87) rotate(-85)" style="font-size:12px">Eichengrundschneise</text>
 <text x="0" y="0" transform="translate(603,201) rotate(-34)" style="font-size:12px">Flughafenschneise</text>
 <text x="0" y="0" transform="translate(792,78) rotate(-34)" style="font-size:12px">Flughafenschneise</text>
 <text x="0" y="0" transform="translate(858,48) rotate(58)" style="font-size:12px">Sausteigschneise</text>
 <text x="0" y="0" transform="translate(603,236) rotate(8)" style="font-size:12px">Steigschneise</text>
 <text x="0" y="0" transform="translate(710,240) rotate(8)" style="font-size:12px">Steigschneise</text>
 <text x="0" y="0" transform="translate(497,390) rotate(4)" style="font-size:12px">Eyssenschneise</text>
 <text x="0" y="0" transform="translate(700,412) rotate(4)" style="font-size:12px">Eyssenschneise</text>
 <text x="0" y="0" transform="translate(863,300) rotate(-62)" style="font-size:12px">Rießbahn</text>
 <text x="0" y="0" transform="translate(562,126) rotate(-80)" style="font-size:12px">F20</text>
 <text x="0" y="0" transform="translate(522,187) rotate(42)" style="font-size:12px">F20</text>
</g>
<!-- red dots -->
<g fill="#ff0000">
 <circle cx="55.8" cy="174.6" r="3.8"/><circle cx="127.5" cy="175.7" r="3.8"/><circle cx="140" cy="175.7" r="3.8"/>
 <circle cx="152.4" cy="177.2" r="3.8"/><circle cx="164.9" cy="178.8" r="3.8"/><circle cx="177.4" cy="179.9" r="3.8"/>
 <circle cx="188.6" cy="180.1" r="3.8"/><circle cx="201.3" cy="182.1" r="3.8"/><circle cx="213.1" cy="183.5" r="3.8"/>
 <circle cx="225.6" cy="184.8" r="3.8"/><circle cx="236.5" cy="186.7" r="3.8"/><circle cx="274.2" cy="190" r="3.8"/>
 <circle cx="285.2" cy="191" r="3.8"/><circle cx="297.5" cy="194.4" r="3.8"/><circle cx="310.1" cy="196" r="3.8"/>
 <circle cx="320.9" cy="197.5" r="3.8"/><circle cx="333.4" cy="199.2" r="3.8"/><circle cx="344.5" cy="202.2" r="3.8"/>
 <circle cx="356.6" cy="203.8" r="3.8"/><circle cx="369.2" cy="205.4" r="3.8"/><circle cx="380.3" cy="208.4" r="3.8"/>
 <circle cx="416.4" cy="216.5" r="3.8"/><circle cx="427.6" cy="217.8" r="3.8"/><circle cx="439.4" cy="220.8" r="3.8"/>
 <circle cx="452.6" cy="222.8" r="3.8"/>
</g>
<!-- crosshair -->
<g stroke="#ff4646" stroke-width="2.4" fill="none">
 <circle cx="451.4" cy="223.5" r="26.3"/>
 <path d="M451.4,192 V210 M451.4,237 V254.5 M419.7,223.5 H437 M465.7,223.5 H482.3"/>
</g>
<!-- navy controls -->
<g fill="#00008b">
 <rect x="26.7" y="12.7" width="28" height="84" rx="14"/>
 <rect x="12.9" y="40.2" width="55.5" height="28.5" rx="14"/>
</g>
<g fill="#fff">
 <path d="M40.6,18.4 L49.8,33.6 L31.6,33.6 Z"/>
 <path d="M40.6,90.4 L49.8,75.3 L31.6,75.3 Z"/>
 <path d="M18.7,54.4 L34.2,46 L34.2,63.3 Z"/>
 <path d="M62.7,54.4 L47.6,46 L47.6,63.3 Z"/>
</g>
<rect x="26.7" y="132" width="28" height="300" fill="#808080" fill-opacity="0.42"/>
<g stroke="#222" stroke-opacity="0.55" stroke-width="1.8">
 <path d="M27,149.3H54.5M27,166.6H54.5M27,183.9H54.5M27,201.2H54.5M27,218.5H54.5M27,235.8H54.5M27,253.1H54.5M27,270.4H54.5M27,287.7H54.5M27,305H54.5M27,322.3H54.5M27,339.6H54.5M27,356.9H54.5M27,374.2H54.5M27,391.5H54.5M27,408.8H54.5"/>
</g>
<path d="M27.4,132V430M54,132V430" stroke="#1a1a1a" stroke-width="1.6"/>
<path d="M26.7,132.7 V118.8 A14,14 0 0 1 54.7,118.8 V132.7 Z" fill="#00008b"/>
<path d="M33.1,120.4H48.7M40.9,112.6V128.3" stroke="#fff" stroke-width="3.6"/>
<rect x="25.2" y="186" width="30.8" height="13.6" rx="5" fill="#00008b"/>
<path d="M31.5,193H50.2" stroke="#fff" stroke-width="3.4" stroke-linecap="round"/>
<path d="M26.7,425 H54.7 V440 A14,14 0 0 1 26.7,440 Z" fill="#00008b"/>
<path d="M33.5,436H48" stroke="#fff" stroke-width="3" stroke-linecap="round"/>
</svg>

  </div>
</div>
<svg class="a" style="left:528px;top:212px" width="940" height="14"><path d="M1.5,12 A10.5,10.5 0 0 1 12,1.5" fill="none" stroke="#8a8a8a" stroke-width="1"/><path d="M926,1.5 A10.5,10.5 0 0 1 936.5,12" fill="none" stroke="#8a8a8a" stroke-width="1"/></svg>
<div class="t" style="left:921.97px;top:225.00px;font:normal 700 20px 'Liberation Sans';color:#2e2e2e;transform:scaleX(1.0291);">BNC: Map View</div>
<div class="t" style="left:545.77px;top:943.70px;font:normal 400 20px 'Liberation Sans';color:#333333;transform:scaleX(1.0271);">Latitude: 50 3 25.4130</div>
<div class="t" style="left:768.88px;top:943.70px;font:normal 400 20px 'Liberation Sans';color:#333333;transform:scaleX(1.0236);">Longitude: 8 36 24.9104</div>
</body></html>
